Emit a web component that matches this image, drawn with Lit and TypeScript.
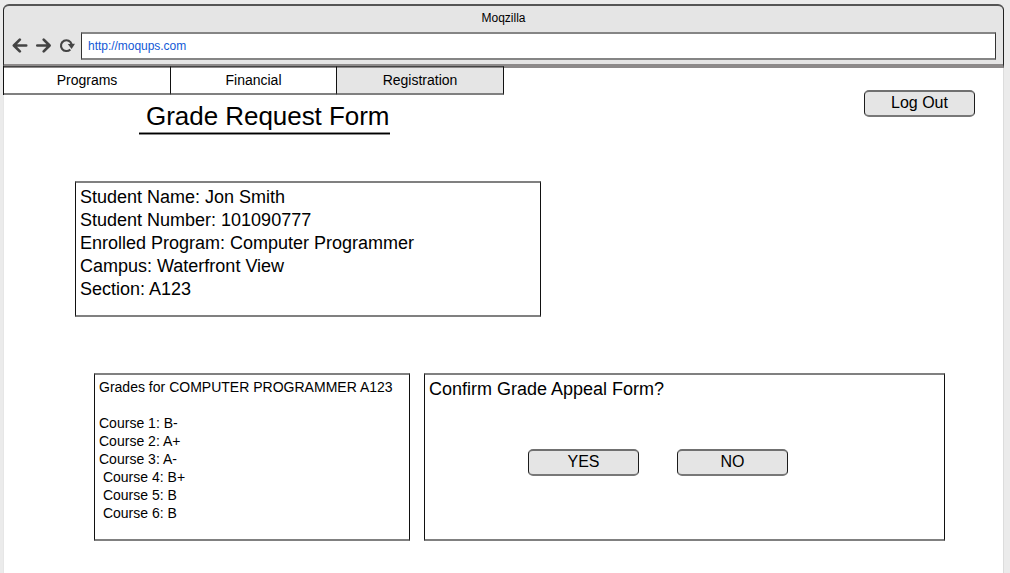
import { LitElement, html, css, svg } from "lit";
import { customElement, property } from "lit/decorators.js";
import { classMap } from "lit/directives/class-map.js";

@customElement("wire-button")
class WireButton extends LitElement {
  @property() label = "";

  static styles = css`
    :host { display: block; width: 111px; height: 27px; }
    .button {
      box-sizing: border-box;
      display: block;
      width: 100%;
      height: 100%;
      margin: 0;
      padding: 0 0 2px;
      border: solid #1c1c1c;
      border-width: 2px 1px;
      border-top-color: #707070;
      border-bottom-color: #787878;
      border-radius: 5px;
      background: #e5e5e5;
      color: #000;
      font: 16px/21px "Liberation Sans", Arial, sans-serif;
      text-align: center;
    }
  `;

  render() {
    return html`<button class="button">${this.label}</button>`;
  }
}

@customElement("app-root")
class AppRoot extends LitElement {
  tabs = ["Programs", "Financial", "Registration"];
  active = "Registration";
  student = [
    "Student Name: Jon Smith",
    "Student Number: 101090777",
    "Enrolled Program: Computer Programmer",
    "Campus: Waterfront View",
    "Section: A123",
  ];
  grades = [
    "Grades for COMPUTER PROGRAMMER A123",
    "",
    "Course 1: B-",
    "Course 2: A+",
    "Course 3: A-",
    " Course 4: B+",
    " Course 5: B",
    " Course 6: B",
  ];

  static styles = css`
    :host {
      display: block;
      box-sizing: border-box;
      height: 573px;
      padding: 4px 6px 0 3px;
      overflow: hidden;
      background: #ebebeb;
      color: #000;
      font-family: "Liberation Sans", Arial, sans-serif;
    }
    * { box-sizing: border-box; }
    .window { display: flex; flex-direction: column; height: 569px; }
    .chrome {
      height: 64px;
      flex: none;
      background: #e5e5e5;
      border: solid #222;
      border-width: 2px 1px 4px;
      border-top-color: #555;
      border-bottom-color: #8d8a8a;
      border-radius: 6px 6px 0 0;
    }
    .title { height: 26px; padding-top: 1px; font-size: 12px; line-height: 22px; text-align: center; }
    .bar { display: flex; align-items: center; padding: 0 7px 0 8px; }
    .icons { display: block; flex: none; width: 69px; height: 28px; }
    .url {
      flex: 1;
      height: 28px;
      padding: 0 6px;
      background: #fff;
      border: solid #333;
      border-width: 2px 1px;
      border-top-color: #858585;
      border-bottom-color: #858585;
      color: #1259d6;
      font-size: 12px;
      letter-spacing: -0.03px;
      line-height: 24px;
    }
    .page {
      flex: 1;
      background: #fff;
      border-left: 1px solid #e6e6e6;
      border-right: 1px solid #dcdcdc;
    }
    .top { display: flex; justify-content: space-between; height: 113px; padding-right: 28px; }
    .tabs { display: flex; height: 29px; margin: -2px 0 0 -1px; width: 501px; border-left: 1px solid #111; }
    .tab {
      flex: none;
      width: 166px;
      border: solid #111;
      border-width: 1px 1px 2px 0;
      border-top-color: #444;
      border-bottom-color: #808080;
      font-size: 14px;
      line-height: 26px;
      text-align: center;
      background: #fff;
      box-shadow: inset 0 1px #8d8a8a;
    }
    .tab:nth-child(1), .tab:nth-child(3) { width: 167px; }
    .tab.active { background: #e5e5e5; }
    .heading {
      width: 251px;
      height: 39px;
      margin: 0 0 0 135px;
      padding-left: 7px;
      border-bottom: 1px solid #000;
      box-shadow: 0 1px #8a8a8a, inset 0 -1px #8a8a8a;
      font-size: 26px;
      font-weight: 400;
      letter-spacing: -0.04px;
      line-height: 43px;
      white-space: nowrap;
    }
    .logout { margin-top: 22px; }
    .box { background: #fff; border: solid #111; border-width: 2px 1px; border-top-color: #808080; border-bottom-color: #808080; }
    .line { margin: 0; white-space: pre; }
    .student { width: 466px; height: 136px; margin-left: 71px; padding: 3px 4px; font-size: 18px; }
    .student .line { height: 23px; line-height: 23px; }
    .panels { display: flex; gap: 14px; padding: 56px 0 0 90px; }
    .grades { width: 316px; height: 168px; padding: 3px 4px; font-size: 14px; letter-spacing: 0.01px; }
    .grades .line { height: 18px; line-height: 18px; }
    .confirm { width: 521px; height: 168px; padding: 3px 4px; font-size: 18px; }
    .confirm .line { height: 23px; line-height: 23px; }
    .actions { display: flex; gap: 38px; padding: 48px 0 0 99px; }
  `;

  render() {
    return html`
      <div class="window">
        <header class="chrome">
          <div class="title">Moqzilla</div>
          <div class="bar">
            <svg class="icons" viewBox="12 32 69 28" fill="none" stroke="#444" stroke-width="2.7">
              ${svg`
                <path stroke-linecap="round" stroke-linejoin="round" d="M26.2 45.5H14M19.8 39.6L13.9 45.5L19.8 51.4" />
                <path stroke-linecap="round" stroke-linejoin="round" d="M37.3 45.5H49.5M43.7 39.6L49.6 45.5L43.7 51.4" />
                <path stroke-width="2.1" d="M70.3 49.4A5.4 5.4 0 1 1 71.6 44.2" />
                <path fill="#444" stroke="none" d="M67.8 44L75 43.8L71.6 49Z" />
              `}
            </svg>
            <div class="url">http://moqups.com</div>
          </div>
        </header>
        <main class="page">
          <div class="top">
            <div>
              <nav class="tabs">
                ${this.tabs.map(
                  (t) => html`<div class=${classMap({ tab: true, active: t === this.active })}>${t}</div>`
                )}
              </nav>
              <h1 class="heading">Grade Request Form</h1>
            </div>
            <wire-button class="logout" label="Log Out"></wire-button>
          </div>
          <section class="box student">${this.student.map((l) => html`<p class="line">${l}</p>`)}</section>
          <div class="panels">
            <section class="box grades">${this.grades.map((l) => html`<p class="line">${l}</p>`)}</section>
            <section class="box confirm">
              <p class="line">Confirm Grade Appeal Form?</p>
              <div class="actions">
                <wire-button label="YES"></wire-button>
                <wire-button label="NO"></wire-button>
              </div>
            </section>
          </div>
        </main>
      </div>
    `;
  }
}
